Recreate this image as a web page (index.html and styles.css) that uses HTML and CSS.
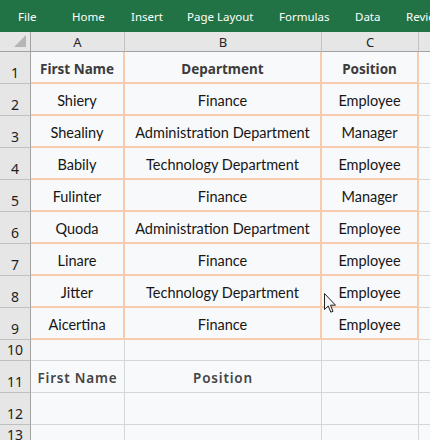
FILE: index.html
```html
<!DOCTYPE html>
<html>
<head>
<meta charset="utf-8">
<link rel="stylesheet" href="styles.css">
</head>
<body>
<div class="app">
  <div class="ribbon">
    <span class="tab t-file">File</span>
    <span class="tab t-home">Home</span>
    <span class="tab t-insert">Insert</span>
    <span class="tab t-page">Page Layout</span>
    <span class="tab t-form">Formulas</span>
    <span class="tab t-data">Data</span>
    <span class="tab t-rev">Revie</span>
  </div>
  <div class="sheet">
    <div class="corner"><span class="tri"></span></div>
    <div class="ch">A</div><div class="ch">B</div><div class="ch">C</div><div class="ch last"></div>

    <div class="rh">1</div><div class="d hd">First Name</div><div class="d hd">Department</div><div class="d hd">Position</div><div class="c"></div>
    <div class="rh">2</div><div class="d">Shiery</div><div class="d">Finance</div><div class="d">Employee</div><div class="c"></div>
    <div class="rh">3</div><div class="d">Shealiny</div><div class="d">Administration Department</div><div class="d">Manager</div><div class="c"></div>
    <div class="rh">4</div><div class="d">Babily</div><div class="d">Technology Department</div><div class="d">Employee</div><div class="c"></div>
    <div class="rh">5</div><div class="d">Fulinter</div><div class="d">Finance</div><div class="d">Manager</div><div class="c"></div>
    <div class="rh">6</div><div class="d">Quoda</div><div class="d">Administration Department</div><div class="d">Employee</div><div class="c"></div>
    <div class="rh">7</div><div class="d">Linare</div><div class="d">Finance</div><div class="d">Employee</div><div class="c"></div>
    <div class="rh">8</div><div class="d">Jitter</div><div class="d">Technology Department</div><div class="d">Employee</div><div class="c"></div>
    <div class="rh">9</div><div class="d">Aicertina</div><div class="d">Finance</div><div class="d">Employee</div><div class="c"></div>
    <div class="rh">10</div><div class="c"></div><div class="c"></div><div class="c"></div><div class="c"></div>
    <div class="rh">11</div><div class="c lbl">First Name</div><div class="c lbl">Position</div><div class="c"></div><div class="c"></div>
    <div class="rh">12</div><div class="c"></div><div class="c"></div><div class="c"></div><div class="c"></div>
    <div class="rh rh-last">13</div><div class="c"></div><div class="c"></div><div class="c"></div><div class="c"></div>
  </div>
  <svg class="cursor" width="13" height="21" viewBox="0 0 13 21">
    <path d="M0.5 0.5 L0.5 16.5 L4.2 13 L6.8 19.2 L9 18.3 L6.5 12.2 L11.5 12.2 Z" fill="#f4f4f4" stroke="#222" stroke-width="1" stroke-linejoin="round"/>
  </svg>
</div>
</body>
</html>
```
FILE: styles.css
```css
html, body {
  margin: 0;
  padding: 0;
  background: #f8f9fb;
}
.app {
  position: relative;
  width: 430px;
  height: 440px;
  overflow: hidden;
}
.ribbon {
  height: 32px;
  background: #217346;
  display: flex;
  align-items: center;
  white-space: nowrap;
  overflow: hidden;
  font-family: "Noto Sans", sans-serif;
  font-size: 11.5px;
  color: #ffffff;
  padding-left: 18px;
  box-sizing: border-box;
}
.tab {
  flex: none;
  line-height: 32px;
  padding-top: 2px;
}
.t-file { width: 54px; }
.t-home { width: 59px; }
.t-insert { width: 56px; }
.t-page { width: 92px; }
.t-form { width: 76px; }
.t-data { width: 51px; }
.t-rev { width: 30px; }
.sheet {
  display: grid;
  grid-template-columns: 31px 94px 197px 97px 40px;
  grid-template-rows: 20px repeat(9, 32px) 21px 32px 32px 32px;
  font-family: "Lato", sans-serif;
  font-size: 14.5px;
  color: #161616;
}
.sheet > div {
  box-sizing: border-box;
}
.corner {
  background: #e6e6e6;
  border-right: 1px solid #a3a3a3;
  border-bottom: 1px solid #a3a3a3;
  position: relative;
}
.tri {
  position: absolute;
  right: 4px;
  bottom: 4px;
  width: 0;
  height: 0;
  border-left: 12px solid transparent;
  border-bottom: 12px solid #b5b5b5;
}
.ch {
  background: #e6e6e6;
  border-right: 1px solid #c2c2c2;
  border-bottom: 1px solid #a3a3a3;
  display: flex;
  align-items: center;
  justify-content: center;
  font-family: "Noto Sans", sans-serif;
  font-size: 13px;
  color: #262626;
  padding-top: 1px;
}
.rh {
  background: #e6e6e6;
  border-right: 1px solid #a3a3a3;
  border-bottom: 1px solid #bfbfbf;
  display: flex;
  align-items: flex-end;
  justify-content: center;
  font-family: "Noto Sans", sans-serif;
  font-size: 14px;
  color: #1e1e1e;
  padding-bottom: 1px;
  line-height: 18px;
}
.rh-last {
  align-items: flex-start;
  padding-top: 1px;
}
.c {
  border-right: 1px solid #d6d6d6;
  border-bottom: 1px solid #d6d6d6;
  display: flex;
  align-items: center;
  justify-content: center;
}
.d {
  border-right: 2px solid #f8cbad;
  border-bottom: 2px solid #f8cbad;
  display: flex;
  align-items: center;
  justify-content: center;
  padding-top: 3px;
  white-space: nowrap;
}
.hd {
  font-family: "Noto Sans", sans-serif;
  font-weight: 700;
  font-size: 13.5px;
  color: #3c3c3c;
}
.lbl {
  font-family: "Noto Sans", sans-serif;
  font-weight: 600;
  font-size: 13.5px;
  color: #454545;
  letter-spacing: 0.8px;
  padding-top: 3px;
}
.cursor {
  position: absolute;
  left: 324px;
  top: 293px;
}
```
